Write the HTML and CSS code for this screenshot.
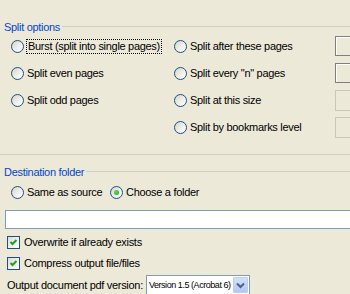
FILE: index.html
```html
<!DOCTYPE html>
<html>
<head>
<meta charset="utf-8">
<link rel="stylesheet" href="styles.css">
</head>
<body>
<div class="page">
  <section class="group group-split">
    <div class="legend"><span class="legend-text">Split options</span><span class="legend-line"></span></div>
    <div class="split-grid">
      <label class="opt"><span class="radio"></span><span class="opt-text focus">Burst (split into single pages)</span></label>
      <label class="opt"><span class="radio"></span><span class="opt-text">Split after these pages</span></label>
      <span class="field"></span>

      <label class="opt"><span class="radio"></span><span class="opt-text">Split even pages</span></label>
      <label class="opt"><span class="radio"></span><span class="opt-text">Split every "n" pages</span></label>
      <span class="field"></span>

      <label class="opt"><span class="radio"></span><span class="opt-text">Split odd pages</span></label>
      <label class="opt"><span class="radio"></span><span class="opt-text">Split at this size</span></label>
      <span class="field disabled"></span>

      <span class="empty"></span>
      <label class="opt"><span class="radio"></span><span class="opt-text">Split by bookmarks level</span></label>
      <span class="field disabled"></span>
    </div>
  </section>

  <section class="group group-dest">
    <div class="legend"><span class="legend-text">Destination folder</span><span class="legend-line"></span></div>
    <div class="dest-radios">
      <label class="opt"><span class="radio"></span><span class="opt-text">Same as source</span></label>
      <label class="opt"><span class="radio checked"></span><span class="opt-text">Choose a folder</span></label>
    </div>
    <div class="path-input"></div>
    <label class="check-row"><span class="checkbox"><svg width="11" height="11" viewBox="0 0 11 11"><path d="M2.5 5 L4.5 7 L8.5 3" fill="none" stroke="#21a121" stroke-width="2"/></svg></span><span class="opt-text">Overwrite if already exists</span></label>
    <label class="check-row"><span class="checkbox"><svg width="11" height="11" viewBox="0 0 11 11"><path d="M2.5 5 L4.5 7 L8.5 3" fill="none" stroke="#21a121" stroke-width="2"/></svg></span><span class="opt-text">Compress output file/files</span></label>
    <div class="version-row">
      <span class="opt-text">Output document pdf version:</span>
      <span class="combo"><span class="combo-text">Version 1.5 (Acrobat 6)</span><span class="combo-btn"><svg width="9" height="7" viewBox="0 0 9 7"><path d="M1 1.5 L4.5 5 L8 1.5" fill="none" stroke="#4d6185" stroke-width="2"/></svg></span></span>
    </div>
  </section>
</div>
</body>
</html>
```

FILE: styles.css
```css
* { box-sizing: border-box; }
html, body {
  margin: 0;
  padding: 0;
  width: 350px;
  height: 294px;
  overflow: hidden;
  background: #ece9d8;
}
body {
  font-family: Tahoma, "Liberation Sans", Arial, sans-serif;
  font-size: 11px;
  letter-spacing: -0.3px;
  color: #000;
}
.page {
  padding-top: 20px;
}
.legend {
  display: flex;
  align-items: center;
  height: 14px;
  padding-left: 4px;
}
.legend-text {
  color: #0046d5;
  white-space: nowrap;
  padding-right: 2px;
}
.legend-line {
  flex: 1;
  height: 1px;
  background: #d0d0bf;
  margin-top: -2px;
}
.group-split {
  border-bottom: 1px solid #d0d0bf;
  padding-bottom: 17px;
}
.split-grid {
  display: grid;
  grid-template-columns: 163px 161px 1fr;
  grid-auto-rows: 20px;
  row-gap: 7px;
  padding-left: 11px;
  margin-top: 2px;
  align-items: center;
}
.opt {
  display: flex;
  align-items: center;
  white-space: nowrap;
}
.radio {
  width: 13px;
  height: 13px;
  border-radius: 50%;
  border: 1px solid #1c5180;
  background: linear-gradient(135deg, #d6d4cc 0%, #f0efea 55%, #ffffff 100%);
  flex: none;
  margin-right: 3px;
  position: relative;
}
.radio.checked::after {
  content: "";
  position: absolute;
  left: 3px;
  top: 3px;
  width: 5px;
  height: 5px;
  border-radius: 50%;
  background: radial-gradient(circle at 40% 40%, #5ede5a, #21a121);
}
.opt-text {
  white-space: nowrap;
  line-height: 13px;
}
.focus {
  outline: 1px dotted #000;
  outline-offset: 0px;
  padding: 0 1px;
}
.field {
  display: block;
  height: 20px;
  background: #ece9d8;
  border: 1px solid #7f7f7f;
  border-right: none;
  box-shadow: inset 1px 1px 0 #ffffff;
}
.field.disabled {
  border-color: #c9c7ba;
  box-shadow: none;
  height: 21px;
}
.group-dest {
  padding-top: 10px;
}
.dest-radios {
  display: flex;
  gap: 18px;
  padding-left: 11px;
  margin-top: 6px;
  height: 14px;
  align-items: center;
}
.dest-radios .opt:first-child {
  width: 81px;
}
.path-input {
  height: 19px;
  margin: 11px 0 0 5px;
  background: #fff;
  border: 1px solid #7f9db9;
  border-right: none;
}
.check-row {
  display: flex;
  align-items: center;
  padding-left: 7px;
  margin-top: 6px;
  height: 15px;
}
.check-row + .check-row {
  margin-top: 6px;
}
.checkbox {
  width: 13px;
  height: 13px;
  border: 1px solid #1c5180;
  background: linear-gradient(135deg, #dcdcd6 0%, #f4f3ee 60%, #ffffff 100%);
  flex: none;
  margin-right: 4px;
  display: flex;
  align-items: center;
  justify-content: center;
}
.version-row {
  display: flex;
  align-items: center;
  padding-left: 7px;
  margin-top: 4px;
  gap: 3px;
}
.combo {
  display: flex;
  align-items: center;
  width: 104px;
  height: 20px;
  background: #fff;
  border: 1px solid #7f9db9;
  padding: 1px;
}
.combo-text {
  flex: 1;
  min-width: 0;
  padding-left: 1px;
  white-space: nowrap;
  font-family: "Liberation Sans", Arial, sans-serif;
  font-size: 9px;
  letter-spacing: -0.45px;
}
.combo-btn {
  width: 15px;
  height: 16px;
  border: 1px solid #b9cdf7;
  border-radius: 1px;
  background: linear-gradient(#d2e0fd, #b4c8f6);
  display: flex;
  align-items: center;
  justify-content: center;
  flex: none;
}
```
